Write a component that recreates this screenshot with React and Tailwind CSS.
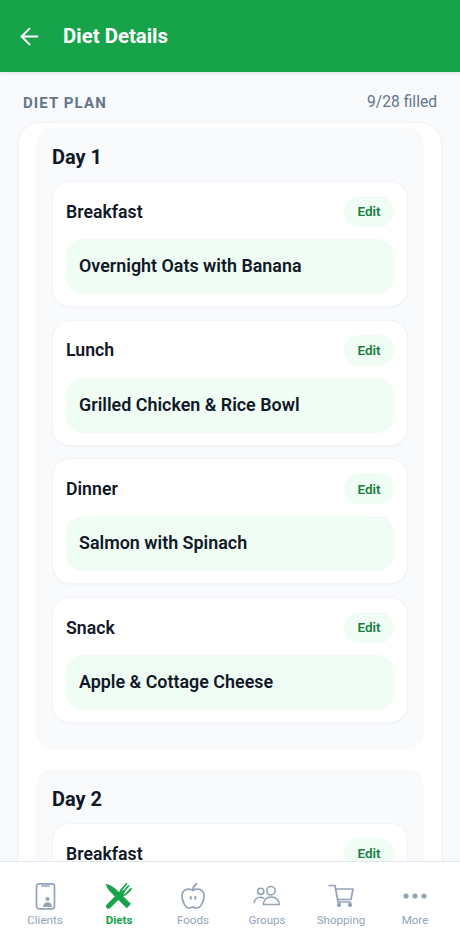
import React from 'react';
import { ArrowLeft } from 'lucide-react';

const meals = [
    { name: 'Breakfast', food: 'Overnight Oats with Banana' },
    { name: 'Lunch', food: 'Grilled Chicken & Rice Bowl' },
    { name: 'Dinner', food: 'Salmon with Spinach' },
    { name: 'Snack', food: 'Apple & Cottage Cheese' },
];

const MealCard = ({ name, food }) => (
    <div className="rounded-[18px] bg-white border border-[#f1f5f9] px-[13px] pt-[14px] pb-[12px] shadow-[0_1px_2px_rgba(15,23,42,0.03)]">
        <div className="flex items-center justify-between h-[31px]">
            <span className="pt-[1px] text-[17.7px] font-semibold text-[#111827]">{name}</span>
            <span className="w-[50px] h-[31px] rounded-full bg-[#f0fdf4] flex items-center justify-center text-[13.5px] font-semibold text-[#15803d]">Edit</span>
        </div>
        {food && (
            <div className="mt-[12px] h-[55px] rounded-[16px] bg-[#f0fdf4] flex items-center px-[13px]">
                <span className="text-[17.9px] font-semibold text-[#111827]">{food}</span>
            </div>
        )}
    </div>
);

const ClientsIcon = () => (
    <svg width="24" height="28" viewBox="0 0 24 28" fill="none" stroke="currentColor" strokeWidth="1.7">
        <rect x="3.5" y="1.8" width="18" height="25" rx="2.5" />
        <path d="M9 4h7" strokeLinecap="round" />
        <circle cx="14.5" cy="17" r="2.1" fill="currentColor" stroke="none" />
        <path d="M10 25c0-3 2-4.800 4.500-4.800s4.500 1.800 4.500 4.800z" fill="currentColor" stroke="none" />
    </svg>
);

const DietsIcon = () => (
    <svg width="28" height="28" viewBox="0 0 28 28" fill="none" stroke="currentColor" strokeLinecap="round">
        <path d="M1.500 2.500c5 1 9 4.500 13 8.500l11 11-3.800 3.800-11-11C6.500 10.500 2.500 7.500 1.500 2.500z" fill="currentColor" strokeWidth="1" />
        <path d="M3.500 24.200l11.500-11.500" strokeWidth="5" />
        <path d="M15.500 11.500c-.5-1.800.2-3.300 1.500-4.500l4.500-5M17 13c1.800.5 3.300-.2 4.500-1.500l4.500-4.500M18.500 9.500l5-5.500" strokeWidth="1.8" />
        <path d="M16 12.500l2.500-3" strokeWidth="3" />
    </svg>
);

const FoodsIcon = () => (
    <svg width="26" height="28" viewBox="0 0 26 28" fill="none" stroke="currentColor" strokeWidth="1.7" strokeLinecap="round">
        <path d="M13 8.500C10 6 2.500 6.500 2 13.500c-.3 5.500 3.500 12.500 7 12.500 1.800 0 2.500-.8 4-.8s2.200.8 4 .8c3.500 0 7.300-7 7-12.500C23.500 6.500 16 6 13 8.500z" />
        <path d="M13 7.500c.2-2.500 1.300-4.300 3.300-5.500" strokeWidth="2" />
        <path d="M10.700 14.800v2M15.300 14.800v2" strokeWidth="2" />
    </svg>
);

const GroupsIcon = () => (
    <svg width="28" height="22" viewBox="0 0 28 22" fill="none" stroke="currentColor" strokeWidth="1.6">
        <circle cx="7.7" cy="6.3" r="3.1" />
        <circle cx="18" cy="5.7" r="4.2" />
        <path d="M1.200 17.500c.5-3 3-5.300 6-5.300 1.200 0 2.300.3 3.200.8" strokeLinecap="round" />
        <path d="M10.300 19.500c0-4 3-7.500 8-7.500s8 3.500 8 7.500z" strokeLinejoin="round" />
    </svg>
);

const ShoppingIcon = () => (
    <svg width="26" height="24" viewBox="0 0 26 24" fill="none" stroke="currentColor" strokeWidth="1.7" strokeLinejoin="round">
        <path d="M1 1.500h6l3 16.500h12.500" strokeLinecap="round" />
        <path d="M7.700 5H25l-2 10.500H9.500" />
        <circle cx="11" cy="21" r="1.3" fill="currentColor" />
        <circle cx="22" cy="21" r="1.3" fill="currentColor" />
    </svg>
);

const MoreIcon = () => (
    <svg width="24" height="6" viewBox="0 0 24 6" fill="currentColor">
        <circle cx="3" cy="3" r="2.6" />
        <circle cx="12" cy="3" r="2.6" />
        <circle cx="21" cy="3" r="2.6" />
    </svg>
);

const tabs = [
    { label: 'Clients', icon: ClientsIcon },
    { label: 'Diets', icon: DietsIcon, active: true },
    { label: 'Foods', icon: FoodsIcon },
    { label: 'Groups', icon: GroupsIcon },
    { label: 'Shopping', icon: ShoppingIcon },
    { label: 'More', icon: MoreIcon },
];

const App = () => (
    <div className="w-[460px] h-[937px] flex flex-col overflow-hidden bg-[#f8fafc] font-['Roboto',sans-serif]">
        <header className="h-[72px] shrink-0 bg-[#16a34a] flex items-center pl-[16px] shadow-[0_1px_4px_rgba(15,23,42,0.12)]">
            <ArrowLeft size={27} color="#ffffff" strokeWidth={1.8} />
            <h1 className="ml-[20px] text-[20.4px] font-bold text-white">Diet Details</h1>
        </header>

        <main className="flex-1 min-h-0 overflow-hidden px-[18px]">
            <div className="flex items-center justify-between h-[50px] pl-[5px] pr-[5px] pt-[12px]">
                <span className="text-[15px] font-bold tracking-[1.1px] text-[#64748b]">DIET PLAN</span>
                <span className="text-[15.6px] text-[#64748b]">9/28 filled</span>
            </div>
            <div className="rounded-t-[22px] bg-white border border-[#f1f5f9] px-[17px] pt-[4px] shadow-[0_1px_3px_rgba(15,23,42,0.06)]">
                <section className="rounded-[18px] bg-[#f8fafc] px-[16px] pt-[15px] pb-[27px]">
                    <h2 className="text-[20px] font-bold leading-[30px] text-[#111827]">Day 1</h2>
                    <div className="mt-[9px] flex flex-col gap-[12.67px]">
                        {meals.map((meal) => <MealCard key={meal.name} {...meal} />)}
                    </div>
                </section>
                <section className="mt-[19px] rounded-[18px] bg-[#f8fafc] px-[16px] pt-[15px]">
                    <h2 className="text-[20px] font-bold leading-[30px] text-[#111827]">Day 2</h2>
                    <div className="mt-[9px]">
                        <MealCard name={meals[0].name} />
                    </div>
                </section>
            </div>
        </main>

        <nav className="h-[76px] shrink-0 bg-white border-t border-[#e2e8f0] flex px-[8px] pt-[18px]">
            {tabs.map(({ label, icon: Icon, active }) => (
                <div key={label} className={`flex-1 flex flex-col items-center ${active ? 'text-[#16a34a]' : 'text-[#94a3b8]'}`}>
                    <div className="h-[32px] flex items-center justify-center">
                        <Icon />
                    </div>
                    <span className={`mt-[1px] text-[11.6px] leading-[14px] ${active ? 'font-bold' : 'font-normal'}`}>{label}</span>
                </div>
            ))}
        </nav>
    </div>
);

export default App;
